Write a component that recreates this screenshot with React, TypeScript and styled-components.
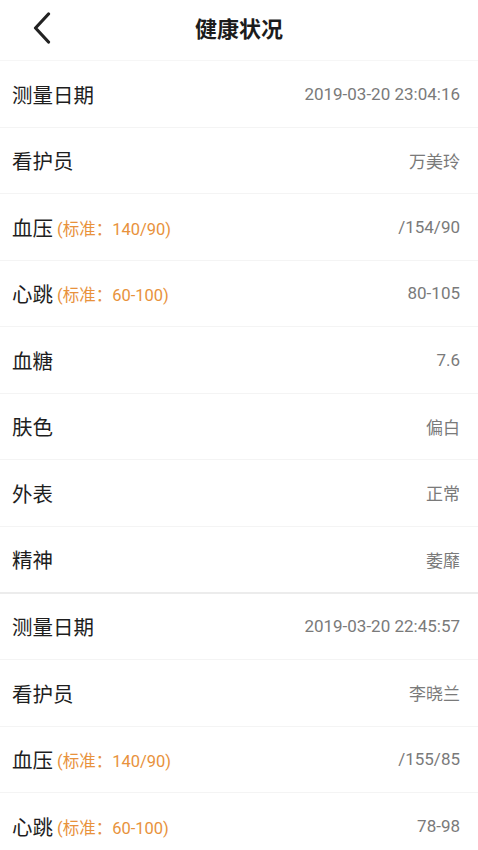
import React from 'react';
import styled, { createGlobalStyle } from 'styled-components';

const GlobalStyle = createGlobalStyle`
  html, body {
    margin: 0;
    padding: 0;
    background: #ffffff;
  }
  body {
    font-family: Roboto, "Noto Sans CJK SC", sans-serif;
  }
`;

interface Record {
  date: string;
  nurse: string;
  pressure: string;
  heart: string;
  sugar?: string;
  skin?: string;
  look?: string;
  spirit?: string;
}

const records: Record[] = [
  {
    date: '2019-03-20 23:04:16',
    nurse: '万美玲',
    pressure: '/154/90',
    heart: '80-105',
    sugar: '7.6',
    skin: '偏白',
    look: '正常',
    spirit: '萎靡'
  },
  {
    date: '2019-03-20 22:45:57',
    nurse: '李晓兰',
    pressure: '/155/85',
    heart: '78-98'
  }
];

const Page = styled.div`
  width: 478px;
  height: 850px;
  overflow: hidden;
  background: #fff;
`;

const Header = styled.div`
  height: 60px;
  border-bottom: 1px solid #f6f6f6;
  display: flex;
  align-items: center;
  justify-content: center;
  position: relative;
`;

const BackButton = styled.div`
  position: absolute;
  left: 30px;
  top: 11px;
  width: 24px;
  height: 34px;
  display: flex;
  align-items: center;
  justify-content: center;
`;

const Title = styled.div`
  font-family: "Noto Sans CJK SC", sans-serif;
  font-size: 22px;
  font-weight: 700;
  color: #1c1c1c;
  margin-top: -6px;
`;

const Group = styled.div<{ $last?: boolean }>`
  border-bottom: ${(p) => (p.$last ? 'none' : '2px solid #ececec')};
`;

const Row = styled.div<{ $last?: boolean }>`
  height: ${(p) => (p.$last ? '65px' : '65.5px')};
  box-sizing: content-box;
  padding: 0 18px 0 12px;
  display: flex;
  align-items: center;
  justify-content: space-between;
  border-bottom: ${(p) => (p.$last ? 'none' : '1px solid #f4f4f4')};
`;

const Label = styled.div`
  display: flex;
  align-items: center;
  font-family: "Noto Sans CJK SC", sans-serif;
  font-size: 20.5px;
  color: #1e1e1e;
`;

const Hint = styled.span`
  font-family: Roboto, "Noto Sans CJK SC", sans-serif;
  font-size: 16.5px;
  color: #e8923c;
  margin-left: 4px;
  margin-top: 2px;
`;

const Value = styled.div`
  font-family: Roboto, "Noto Sans CJK SC", sans-serif;
  font-size: 17px;
  color: #7a7a7a;
`;

function Item({ label, hint, value, last }: { label: string; hint?: string; value: string; last?: boolean }) {
  return (
    <Row $last={last}>
      <Label>
        {label}
        {hint && <Hint>(标准：{hint})</Hint>}
      </Label>
      <Value>{value}</Value>
    </Row>
  );
}

export default function App() {
  return (
    <Page>
      <GlobalStyle />
      <Header>
        <BackButton>
          <svg width="18" height="32" viewBox="0 0 18 32">
            <path d="M15.5 2 L2.5 16 L15.5 30" fill="none" stroke="#222" strokeWidth="3.2" strokeLinecap="round" strokeLinejoin="round" />
          </svg>
        </BackButton>
        <Title>健康状况</Title>
      </Header>
      {records.map((r, i) => {
        const items: { label: string; hint?: string; value: string }[] = [
          { label: '测量日期', value: r.date },
          { label: '看护员', value: r.nurse },
          { label: '血压', hint: '140/90', value: r.pressure },
          { label: '心跳', hint: '60-100', value: r.heart }
        ];
        if (r.sugar) items.push({ label: '血糖', value: r.sugar });
        if (r.skin) items.push({ label: '肤色', value: r.skin });
        if (r.look) items.push({ label: '外表', value: r.look });
        if (r.spirit) items.push({ label: '精神', value: r.spirit });
        const lastGroup = i === records.length - 1;
        return (
          <Group key={r.date} $last={lastGroup}>
            {items.map((it, j) => (
              <Item key={it.label} {...it} last={!lastGroup && j === items.length - 1} />
            ))}
          </Group>
        );
      })}
    </Page>
  );
}
